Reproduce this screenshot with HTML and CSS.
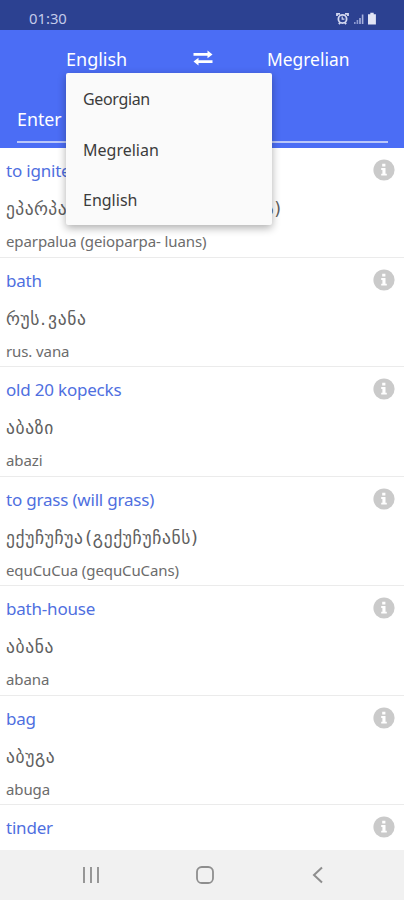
FILE: index.html
```html
<!DOCTYPE html>
<html lang="en">
<head>
<meta charset="utf-8">
<title>Dictionary</title>
<link rel="stylesheet" href="styles.css">
</head>
<body>
<svg class="defs" aria-hidden="true">
  <symbol id="info" viewBox="0 0 22 22">
    <circle cx="11" cy="11" r="10.6" fill="#cacaca"/>
    <path fill="#fff" d="M9.2 4.7h3.2v2.9H9.2zM8.2 9h4.3v5.7h1.3v1.9H8.2v-1.9h1.2v-3.8H8.2z"/>
  </symbol>
</svg>
<div class="screen">
  <div class="status">
    <span class="clock">01:30</span>
    <svg class="status-icons" width="44" height="14" viewBox="0 0 44 14">
      <g fill="none" stroke="#d3d8f0" stroke-width="1.8">
        <circle cx="6.5" cy="7" r="4.1"/>
        <path d="M1 4V1.8h3M12 4V1.8H9M2.8 12l1.4-1.4M10.2 12l-1.4-1.4"/>
        <path stroke-width="1.2" d="M6.2 4.6v2.6h2.2"/>
      </g>
      <path fill="#8c99d0" d="M18 10h1.6v2H18zM20.6 8h1.6v4h-1.6z"/>
      <path fill="#a7b1dd" d="M23.2 6h1.6v6h-1.6zM25.8 2.500h1.600v9.500h-1.600z"/>
      <path fill="#e2e5f5" d="M34.300 .8h3.400v1.400h2.200v10.300h-7.900V2.200h2.300z"/>
    </svg>
  </div>
  <header class="header">
    <div class="languages">
      <div class="from">English</div>
      <svg class="swap" width="20" height="16" viewBox="0 0 20 16">
        <path fill="#fff" d="M.5 3h14V.6L19.500 4.400l-5 3.800V5.800H.500zM19.500 10.200h-14V7.700L.500 11.600l5 3.800v-2.400h14z"/>
      </svg>
      <div class="to">Megrelian</div>
      <div class="menu">
        <div class="option georgian">Georgian</div>
        <div class="option">Megrelian</div>
        <div class="option">English</div>
      </div>
    </div>
    <div class="search">Enter</div>
  </header>
  <main class="list">
    <article class="entry"><h2>to ignite</h2><p class="ka long" lang="ka">ეპარპალუა (გეიოპარპა- ლუანს)</p><p class="latin">eparpalua (geioparpa- luans)</p><svg class="info"><use href="#info"/></svg></article>
    <article class="entry"><h2>bath</h2><p class="ka" lang="ka">რუს. ვანა</p><p class="latin">rus. vana</p><svg class="info"><use href="#info"/></svg></article>
    <article class="entry"><h2>old 20 kopecks</h2><p class="ka" lang="ka">აბაზი</p><p class="latin">abazi</p><svg class="info"><use href="#info"/></svg></article>
    <article class="entry"><h2>to grass (will grass)</h2><p class="ka" lang="ka">ექუჩუჩუა (გექუჩუჩანს)</p><p class="latin">equCuCua (gequCuCans)</p><svg class="info"><use href="#info"/></svg></article>
    <article class="entry"><h2>bath-house</h2><p class="ka" lang="ka">აბანა</p><p class="latin">abana</p><svg class="info"><use href="#info"/></svg></article>
    <article class="entry"><h2>bag</h2><p class="ka" lang="ka">აბუგა</p><p class="latin">abuga</p><svg class="info"><use href="#info"/></svg></article>
    <article class="entry"><h2>tinder</h2><svg class="info"><use href="#info"/></svg></article>
  </main>
  <nav class="nav">
    <svg width="18" height="18" viewBox="0 0 18 18"><path stroke="#929292" stroke-width="1.900" d="M2 1v16M9 1v16M16 1v16"/></svg>
    <svg width="20" height="20" viewBox="0 0 20 20"><rect x="2" y="2" width="16" height="16" rx="4.800" fill="none" stroke="#8e8e8e" stroke-width="1.800"/></svg>
    <svg width="18" height="18" viewBox="0 0 18 18"><path fill="none" stroke="#8e8e8e" stroke-width="2" d="M13 1.500L5 9l8 7.500"/></svg>
  </nav>
</div>
</body>
</html>
```
FILE: styles.css
```css
* { box-sizing: border-box; margin: 0; padding: 0; }
body { width: 404px; height: 900px; overflow: hidden; background: #fff; font-family: "Noto Sans", sans-serif; }
svg { display: block; flex: none; }
.defs { position: absolute; width: 0; height: 0; }
.screen { width: 404px; height: 900px; display: flex; flex-direction: column; }
.status { height: 30px; flex: none; background: #2c4191; display: flex; justify-content: space-between; padding: 11px 24px 0 29px; }
.clock { font-size: 14.800px; line-height: 15px; color: #c3caea; }
.status-icons { margin-top: 1px; }
.header { height: 118px; flex: none; background: #4b6df5; color: #fff; padding: 15px 16px 0 17px; }
.languages { position: relative; display: grid; grid-template-columns: 127px 74px 1fr; height: 59px; padding-left: 49px; font-size: 17.400px; line-height: 28px; }
.from { font-size: 18px; }
.swap { margin-top: 5px; }
.menu { position: absolute; left: 49px; top: 28px; width: 206px; height: 152px; padding: 1px 17px; background: #fafafa; border-radius: 2px; box-shadow: 0 3px 8px rgba(0, 0, 0, .32); color: #3c3c3c; font-size: 16px; }
.option { height: 50.500px; line-height: 50px; }
.georgian { letter-spacing: -.35px; }
.search { height: 39px; border-bottom: 2px solid #b9c6fa; font-size: 17.800px; line-height: 30px; }
.list { height: 702px; flex: none; overflow: hidden; }
.entry { height: 109.500px; border-bottom: 1px solid #ebebeb; padding: 10px 9px 0 6px; display: grid; grid-template-columns: 1fr 22px; grid-template-rows: 25px 41px 32px; }
.entry h2 { font-size: 17px; font-weight: 400; letter-spacing: -.2px; line-height: 25px; color: #4f6fe0; white-space: nowrap; }
.ka { grid-column: 1; grid-row: 2; font-family: "DejaVu Sans", sans-serif; font-size: 17.500px; letter-spacing: .65px; word-spacing: -4.500px; line-height: 52px; color: #606060; white-space: nowrap; }
.long { letter-spacing: .43px; }
.latin { grid-column: 1; grid-row: 3; font-size: 15px; letter-spacing: -.1px; line-height: 34px; color: #6c6c6c; white-space: nowrap; }
.info { grid-column: 2; grid-row: 1; width: 22px; height: 22px; margin-top: 1px; }
.nav { height: 50px; flex: none; background: #f1f1f1; display: flex; justify-content: space-between; align-items: center; padding: 0 77px 0 82px; }
```
